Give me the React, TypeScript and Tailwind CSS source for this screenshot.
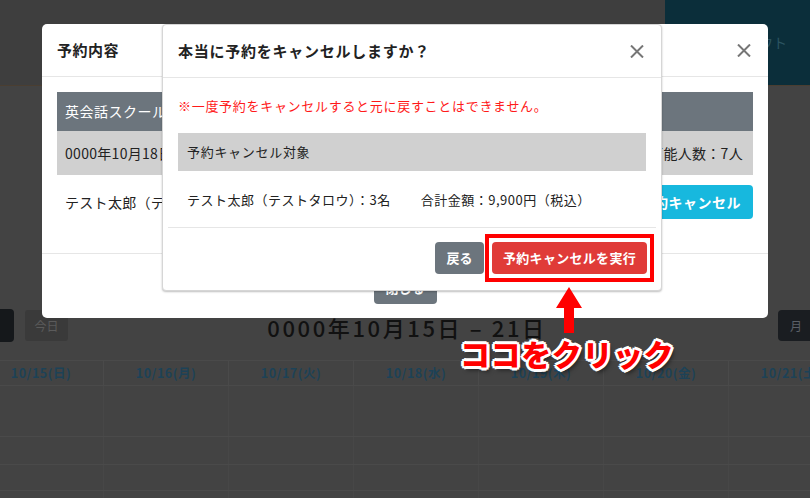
import React from "react";

const days = ["10/15(日)", "10/16(月)", "10/17(火)", "10/18(水)", "10/19(木)", "10/20(金)", "10/21(土)"];
const rowHeights = ["h-[51px]", "h-[28px]", "h-[26px]", "h-[40px]"];

function CloseIcon() {
  return (
    <svg width="14" height="13" viewBox="0 0 14 13" className="shrink-0">
      <path d="M1 0.5 L13 12.5 M13 0.5 L1 12.5" stroke="#767676" strokeWidth="2" fill="none" />
    </svg>
  );
}

function Calendar() {
  return (
    <div className="ml-[-21px] w-[875px]">
      <div className="grid grid-cols-[repeat(7,125px)] h-[26px] border-y border-[#4a4a4a]">
        {days.map((d) => (
          <div key={d} className="flex items-center justify-center border-r border-[#4a4a4a] text-[12.5px] font-bold text-[#1d4257] tracking-[0.5px]">
            {d}
          </div>
        ))}
      </div>
      {rowHeights.map((h, i) => (
        <div key={i} className={`grid grid-cols-[repeat(7,125px)] ${h} border-b border-[#4a4a4a]`}>
          {days.map((d) => (
            <div key={d} className="border-r border-[#474747]" />
          ))}
        </div>
      ))}
    </div>
  );
}

function OuterModal() {
  return (
    <div className="absolute left-[42px] top-[24px] w-[726px] h-[294px] bg-white rounded-[5px] flex flex-col">
      <div className="h-[53px] shrink-0 px-[15px] pr-[17px] flex items-center justify-between border-b border-[#e6e6e6]">
        <span className="text-[15px] font-bold text-[#222] tracking-[0.5px]">予約内容</span>
        <CloseIcon />
      </div>
      <div className="h-[177px] shrink-0 px-[15px] pt-[15px] border-b border-[#e6e6e6] text-[14px]">
        <div className="h-[39px] bg-[#6c757d] text-white flex items-center px-[8px] tracking-[0.5px]">英会話スクール　初心者レッスン</div>
        <div className="h-[44px] bg-[#d0d0d0] text-[#222] flex items-center justify-between px-[8px] pr-[10px] tracking-[0.3px]">
          <span>0000年10月18日（水）10:00〜11:00</span>
          <span>予約可能人数：7人</span>
        </div>
        <div className="mt-[10px] flex items-center justify-between pl-[8px]">
          <span className="text-[#222] tracking-[0.3px]">テスト太郎（テストタロウ）：3名</span>
          <button className="h-[34px] px-[12px] rounded-[4px] bg-[#17b8de] text-white font-bold text-[14px] tracking-[0.5px]">予約キャンセル</button>
        </div>
      </div>
      <div className="flex justify-center pt-[17px]">
        <button className="w-[63px] h-[33px] rounded-[4px] bg-[#6c757d] text-white font-bold text-[13px]">閉じる</button>
      </div>
    </div>
  );
}

function ConfirmModal() {
  return (
    <div className="absolute left-[162px] top-[24px] w-[500px] h-[267px] bg-white rounded-[4px] border border-[#d6d6d6] shadow-[0_1px_2px_rgba(0,0,0,0.25)] flex flex-col">
      <div className="h-[53px] shrink-0 pl-[15px] pr-[17px] flex items-center justify-between border-b border-[#e6e6e6]">
        <span className="text-[15px] font-bold text-[#222] tracking-[0.75px]">本当に予約をキャンセルしますか？</span>
        <CloseIcon />
      </div>
      <div className="h-[149px] shrink-0 px-[15px] pt-[18px] text-[13px]">
        <p className="leading-[20px] text-[#ff1a1a] tracking-[0.7px]">※一度予約をキャンセルすると元に戻すことはできません。</p>
        <div className="mt-[17px] h-[38px] bg-[#d0d0d0] flex items-center pl-[9px] text-[#222] tracking-[0.7px]">予約キャンセル対象</div>
        <div className="mt-[19px] leading-[20px] pl-[9px] text-[#222] tracking-[0.5px]">
          <span>テスト太郎（テストタロウ）：3名</span>
          <span className="ml-[30px]">合計金額：9,900円（税込）</span>
        </div>
      </div>
      <div className="mx-[5px] border-t border-[#e6e6e6]" />
      <div className="flex justify-end gap-[8px] pt-[14px] pr-[14px]">
        <button className="w-[49px] h-[32px] rounded-[4px] bg-[#6c757d] text-white font-bold text-[13px]">戻る</button>
        <button className="w-[155px] h-[32px] rounded-[4px] bg-[#e03b38] text-white font-bold text-[13px] tracking-[0.3px]">予約キャンセルを実行</button>
      </div>
    </div>
  );
}

export default function App() {
  return (
    <div className="relative w-[810px] h-[498px] overflow-hidden bg-[#434343] font-['Noto_Sans_CJK_JP','Noto_Sans',sans-serif]">
      <div className="flex h-[86px] bg-[#3e3e3e] border-b border-[#4a3e31]">
        <div className="flex-1" />
        <div className="w-[145px] bg-[#0b2e3a] flex items-center justify-end pr-[23px] text-[14px] text-[#2b5461]">ログアウト</div>
      </div>

      <div className="mt-[221px] h-[33px] grid grid-cols-[1fr_auto_1fr] items-center">
        <div className="flex items-center">
          <div className="w-[14px] h-[33px] rounded-r-[4px] bg-[#15181b]" />
          <div className="ml-[11px] w-[43px] h-[31px] rounded-[3px] bg-[#3a3a3a] text-[#5b5b5b] text-[12px] flex items-center justify-center">今日</div>
        </div>
        <div className="text-[22px] font-medium text-[#111] tracking-[2.6px] leading-[33px] pt-[4px] pl-[4px]">0000年10月15日 – 21日</div>
        <div className="flex justify-end">
          <div className="w-[32px] h-[31px] rounded-l-[4px] bg-[#1a1d21] text-[#5b6067] text-[12px] flex items-center pl-[12px]">月</div>
        </div>
      </div>

      <div className="mt-[20px]">
        <Calendar />
      </div>

      <OuterModal />
      <ConfirmModal />

      <div className="absolute left-[485px] top-[234px] w-[169px] h-[48px] border-[4px] border-[#ff0000]" />

      <svg className="absolute left-[555px] top-[286px]" width="28" height="48" viewBox="0 0 28 48">
        <path d="M14 1 L27 22 L19 22 L19 47 L9 47 L9 22 L1 22 Z" fill="#ff0000" />
      </svg>

      <div className="absolute left-[460px] top-[331px] text-[30px] font-black text-[#ff0000] leading-[44px] tracking-[0.6px] [text-shadow:3px_0_0_#fff,-3px_0_0_#fff,0_3px_0_#fff,0_-3px_0_#fff,2px_2px_0_#fff,-2px_-2px_0_#fff,2px_-2px_0_#fff,-2px_2px_0_#fff,3px_4px_4px_rgba(0,0,0,0.5)]">
        ココをクリック
      </div>
    </div>
  );
}
